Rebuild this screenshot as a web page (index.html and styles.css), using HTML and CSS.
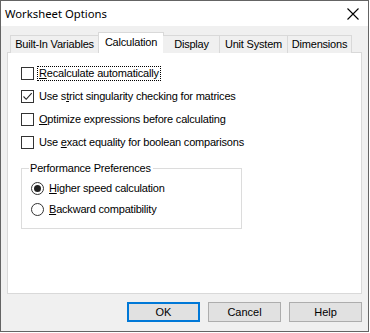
FILE: index.html
```html
<!DOCTYPE html>
<html lang="en">
<head>
    <meta charset="UTF-8">
    <meta name="viewport" content="width=device-width, initial-scale=1.0">
    <title>Worksheet Options</title>
    <link rel="stylesheet" href="styles.css">
</head>
<body>
    <div class="window">
        <div class="titlebar">
            <span class="title">Worksheet Options</span>
            <svg class="close" width="12" height="12" viewBox="0 0 12 12">
                <path d="M0.5 0.5 L11.5 11.5 M11.5 0.5 L0.5 11.5" stroke="#000" stroke-width="1.1" fill="none"/>
            </svg>
        </div>
        <div class="dialog">
            <div class="tabs">
                <div class="tab tab_built">Built-In Variables</div>
                <div class="tab tab_calc active">Calculation</div>
                <div class="tab tab_display">Display</div>
                <div class="tab tab_unit">Unit System</div>
                <div class="tab tab_dim">Dimensions</div>
            </div>
            <div class="panel">
                <div class="option">
                    <span class="box"></span>
                    <span class="label focus"><u>R</u>ecalculate automatically</span>
                </div>
                <div class="option">
                    <span class="box">
                        <svg width="11" height="11" viewBox="0 0 11 11">
                            <path d="M1.5 5.5 L4.2 8.3 L9.7 2.2" stroke="#222" stroke-width="1.1" fill="none"/>
                        </svg>
                    </span>
                    <span class="label">Use s<u>t</u>rict singularity checking for matrices</span>
                </div>
                <div class="option">
                    <span class="box"></span>
                    <span class="label"><u>O</u>ptimize expressions before calculating</span>
                </div>
                <div class="option">
                    <span class="box"></span>
                    <span class="label">Use <u>e</u>xact equality for boolean comparisons</span>
                </div>

                <fieldset class="group">
                    <legend>Performance Preferences</legend>
                    <div class="option radio_row">
                        <span class="radio checked"></span>
                        <span class="label"><u>H</u>igher speed calculation</span>
                    </div>
                    <div class="option radio_row">
                        <span class="radio"></span>
                        <span class="label"><u>B</u>ackward compatibility</span>
                    </div>
                </fieldset>
            </div>
            <div class="buttons">
                <button class="btn default">OK</button>
                <button class="btn">Cancel</button>
                <button class="btn">Help</button>
            </div>
        </div>
    </div>
</body>
</html>
```

FILE: styles.css
```css
*,
*::before,
*::after{
    padding: 0;
    margin: 0;
    box-sizing: border-box;
}

body{
    background: #fff;
    width: 370px;
    height: 333px;
    overflow: hidden;
    font: 11px "Liberation Sans", Arial, sans-serif;
    letter-spacing: -.2px;
    color: #000;
}

.window{
    width: 369px;
    height: 332px;
    border: 1px solid #646464;
    background: #f0f0f0;
    display: flex;
    flex-direction: column;
}

.titlebar{
    height: 25px;
    background: #fff;
    display: flex;
    align-items: center;
    justify-content: space-between;
    padding: 0 9px 0 4px;
}

.title{
    font: 11.3px "Noto Sans", sans-serif;
    letter-spacing: 0;
}

.close{
    display: block;
}

.dialog{
    flex-grow: 1;
    display: flex;
    flex-direction: column;
    padding: 7px 6px 0 6px;
}

/* tab strip */
.tabs{
    display: flex;
    align-items: flex-end;
    padding-left: 3px;
    height: 20px;
    margin-bottom: -1px;
    position: relative;
    z-index: 1;
}

.tab{
    height: 18px;
    border: 1px solid #d9d9d9;
    border-right: none;
    border-bottom: none;
    background: #f0f0f0;
    text-align: center;
    line-height: 17px;
}
.tab:last-child{
    border-right: 1px solid #d9d9d9;
}

.tab_built{ width: 88px; }
.tab_display{ width: 56px; }
.tab_unit{ width: 68px; }
.tab_dim{ width: 65px; }

.tab.active{
    width: 66px;
    height: 21px;
    background: #fff;
    border-right: 1px solid #d9d9d9;
    margin-right: -1px;
    line-height: 18px;
    padding-bottom: 2px;
}
.tab.active + .tab{
    border-left: none;
    padding-left: 1px;
}

.panel{
    height: 242px;
    background: #fff;
    border: 1px solid #d9d9d9;
    padding: 9px 13px 0 13px;
}

.option{
    display: flex;
    align-items: center;
    height: 23px;
}

.box{
    width: 13px;
    height: 13px;
    border: 1px solid #333;
    background: #fff;
    display: flex;
    align-items: center;
    justify-content: center;
    margin-right: 3px;
    flex-shrink: 0;
}
.box svg{
    display: block;
}

.label{
    padding: 0 1px;
    line-height: 13px;
    border: 1px solid transparent;
}
.label.focus{
    border: 1px dotted #000;
}

.label u{
    text-decoration-thickness: 1px;
    text-underline-offset: 1px;
}

/* group box */
.group{
    margin-top: 8px;
    width: 221px;
    height: 67px;
    border: 1px solid #dcdcdc;
    padding: 0 0 0 9px;
}

.group legend{
    padding: 0 2px 0 1px;
    margin-left: -2px;
    line-height: 13px;
}

.radio_row{
    height: 21px;
}
.radio_row:first-of-type{
    margin-top: 3px;
}

.radio{
    width: 13px;
    height: 13px;
    border: 1px solid #333;
    border-radius: 50%;
    background: #fff;
    margin-right: 3px;
    flex-shrink: 0;
    display: flex;
    align-items: center;
    justify-content: center;
}
.radio.checked::after{
    content: '';
    width: 7px;
    height: 7px;
    border-radius: 50%;
    background: #222;
}

/* bottom buttons */
.buttons{
    display: flex;
    justify-content: flex-end;
    gap: 8px;
    padding-top: 8px;
    padding-right: 0;
}

.btn{
    width: 73px;
    height: 20px;
    background: #e1e1e1;
    border: 1px solid #adadad;
    font: inherit;
    color: #000;
}
.btn.default{
    border: 2px solid #0078d7;
}
```
